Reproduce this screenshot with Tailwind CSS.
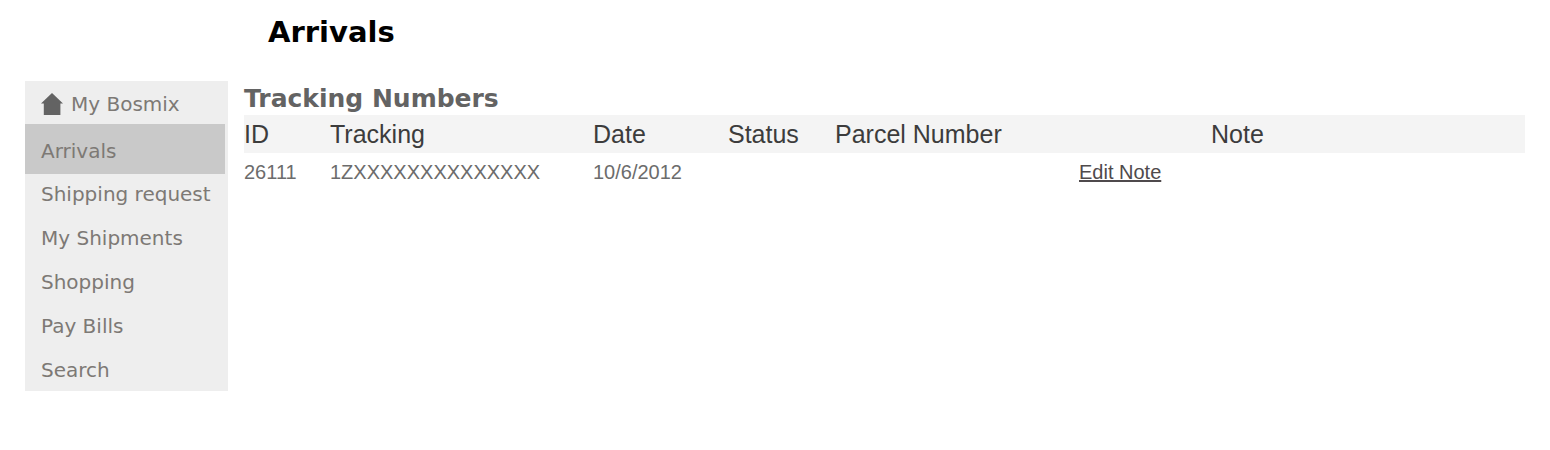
<!DOCTYPE html>
<html lang="en">
<head>
    <meta charset="UTF-8">
    <meta name="viewport" content="width=device-width, initial-scale=1.0">
    <title>Arrivals</title>
    <script src="https://cdn.jsdelivr.net/npm/@tailwindcss/browser@4"></script>
</head>
<body class="bg-white min-h-screen font-['DejaVu_Sans',sans-serif]">
    <header class="h-[81px] pl-[268px] pt-3">
        <h1 class="text-[29px] leading-10 font-bold text-black">Arrivals</h1>
    </header>
    <div class="flex items-start gap-4 px-[25px]">
        <!-- Side menu -->
        <nav class="w-[203px] shrink-0 bg-[#eeeeee] text-[20px] leading-7 text-[#7d7975] whitespace-nowrap">
            <a href="#" class="flex items-center gap-2 h-[43px] pt-0.5 pl-4">
                <svg class="w-[22px] h-[22px]" viewBox="0 0 22 22" fill="#636363" aria-hidden="true">
                    <path d="M11 0L22 10.6H19.4V22H2.8V10.6H0Z"/>
                </svg>
                My Bosmix
            </a>
            <a href="#" class="flex items-center h-[50px] mr-[3px] pt-1 pl-4 bg-[#c9c9c9]" aria-current="page">Arrivals</a>
            <div class="flex flex-col gap-4 pl-4 pt-1.5 pb-[7px]">
                <a href="#">Shipping request</a>
                <a href="#">My Shipments</a>
                <a href="#">Shopping</a>
                <a href="#">Pay Bills</a>
                <a href="#">Search</a>
            </div>
        </nav>
        <!-- Tracking numbers -->
        <main class="flex-1 min-w-0">
            <h2 class="h-[34px] pt-px text-[25px] leading-[34px] font-bold text-[#636363]">Tracking Numbers</h2>
            <table class="w-full table-fixed text-left font-['Liberation_Sans',sans-serif]">
                <colgroup>
                    <col class="w-[86px]">
                    <col class="w-[263px]">
                    <col class="w-[135px]">
                    <col class="w-[107px]">
                    <col class="w-[244px]">
                    <col class="w-[132px]">
                    <col>
                </colgroup>
                <thead>
                    <tr class="h-[38px] bg-[#f4f4f4] text-[25px] leading-[38px] text-[#3c3c3c]">
                        <th class="font-normal">ID</th>
                        <th class="font-normal">Tracking</th>
                        <th class="font-normal">Date</th>
                        <th class="font-normal">Status</th>
                        <th class="font-normal">Parcel Number</th>
                        <td></td>
                        <th class="font-normal">Note</th>
                    </tr>
                </thead>
                <tbody>
                    <tr class="h-[38px] text-[20px] leading-[38px] text-[#6c6c6c]">
                        <td>26111</td>
                        <td>1ZXXXXXXXXXXXXXX</td>
                        <td>10/6/2012</td>
                        <td></td>
                        <td></td>
                        <td><a href="#" class="underline text-[#4f4a4c]">Edit Note</a></td>
                        <td></td>
                    </tr>
                </tbody>
            </table>
        </main>
    </div>
</body>
</html>
